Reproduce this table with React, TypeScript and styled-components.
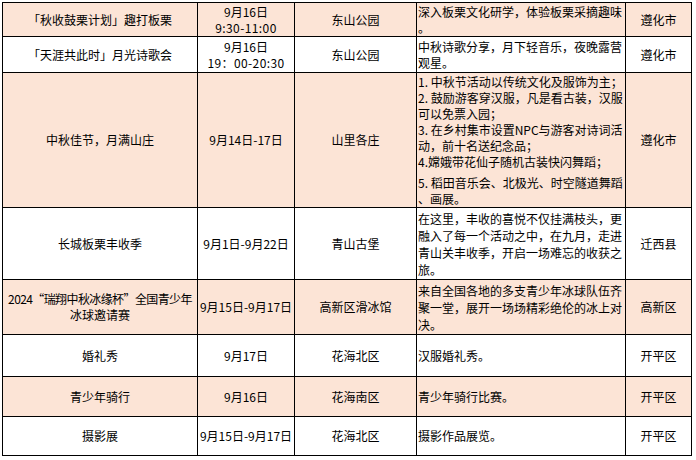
import React from 'react'
import styled, { createGlobalStyle } from 'styled-components'

const GlobalStyle = createGlobalStyle`
  html, body {
    margin: 0;
    padding: 0;
    background: #ffffff;
  }
  body {
    font-family: "Noto Sans CJK SC", "Noto Sans", sans-serif;
    font-size: 12px;
    color: #000000;
  }
`

const Page = styled.div`
  padding: 2px 0 0 2px;
`

const Sheet = styled.div`
  display: flex;
  flex-direction: column;
  width: 690px;
  border-left: 1px solid #000;
  border-top: 1px solid #000;
  box-sizing: border-box;
`

const Row = styled.div<{ $h: number; $peach: boolean }>`
  display: grid;
  grid-template-columns: 195px 97px 122px 209px 66px;
  height: ${({ $h }) => $h}px;
  background: ${({ $peach }) => ($peach ? '#fce4d6' : '#ffffff')};
`

const Cell = styled.div<{ $left?: boolean }>`
  display: flex;
  flex-direction: column;
  justify-content: center;
  align-items: ${({ $left }) => ($left ? 'flex-start' : 'center')};
  text-align: ${({ $left }) => ($left ? 'left' : 'center')};
  padding-left: ${({ $left }) => ($left ? '1px' : '0')};
  border-right: 1px solid #000;
  border-bottom: 1px solid #000;
  box-sizing: border-box;
  overflow: hidden;
  font-size: 12px;
  line-height: 16px;
  white-space: nowrap;
`

const Line = styled.div<{ $lh?: number; $shift?: number; $tight?: boolean }>`
  line-height: ${({ $lh }) => $lh ?? 16}px;
  margin-top: ${({ $shift }) => $shift ?? 0}px;
  letter-spacing: ${({ $tight }) => ($tight ? '-0.6px' : 'normal')};
`

const Clock = styled.div`
  font-size: 12px;
  line-height: 16px;
  letter-spacing: 0.4px;
`

interface Activity {
  name: string[]
  date: React.ReactNode
  place: string
  desc: string[]
  lh?: number
  shifts?: number[]
  area: string
  h: number
}

const rows: Activity[] = [
  {
    name: ['「秋收鼓栗计划」趣打板栗'],
    date: (
      <>
        <Line>9月16日</Line>
        <Clock>9:30-11:00</Clock>
      </>
    ),
    place: '东山公园',
    desc: ['深入板栗文化研学，体验板栗采摘趣味', '。'],
    area: '遵化市',
    h: 34,
  },
  {
    name: ['「天涯共此时」月光诗歌会'],
    date: (
      <>
        <Line>9月16日</Line>
        <Clock>19：00-20:30</Clock>
      </>
    ),
    place: '东山公园',
    desc: ['中秋诗歌分享，月下轻音乐，夜晚露营', '观星。'],
    area: '遵化市',
    h: 36,
  },
  {
    name: ['中秋佳节，月满山庄'],
    date: '9月14日-17日',
    place: '山里各庄',
    desc: [
      '1. 中秋节活动以传统文化及服饰为主；',
      '2. 鼓励游客穿汉服，凡是看古装，汉服',
      '可以免票入园；',
      '3. 在乡村集市设置NPC与游客对诗词活',
      '动，前十名送纪念品；',
      '4.嫦娥带花仙子随机古装快闪舞蹈；',
      '5. 稻田音乐会、北极光、时空隧道舞蹈',
      '、画展。',
    ],
    shifts: [0, 0, 0, 0, 0, 0, 5, 0],
    area: '遵化市',
    h: 135,
  },
  {
    name: ['长城板栗丰收季'],
    date: '9月1日-9月22日',
    place: '青山古堡',
    desc: [
      '在这里，丰收的喜悦不仅挂满枝头，更',
      '融入了每一个活动之中，在九月，走进',
      '青山关丰收季，开启一场难忘的收获之',
      '旅。',
    ],
    lh: 17,
    area: '迁西县',
    h: 72,
  },
  {
    name: ['2024“瑞翔中秋冰缘杯”全国青少年', '冰球邀请赛'],
    date: '9月15日-9月17日',
    place: '高新区滑冰馆',
    desc: [
      '来自全国各地的多支青少年冰球队伍齐',
      '聚一堂，展开一场场精彩绝伦的冰上对',
      '决。',
    ],
    lh: 17,
    area: '高新区',
    h: 55,
  },
  {
    name: ['婚礼秀'],
    date: '9月17日',
    place: '花海北区',
    desc: ['汉服婚礼秀。'],
    area: '开平区',
    h: 42,
  },
  {
    name: ['青少年骑行'],
    date: '9月16日',
    place: '花海南区',
    desc: ['青少年骑行比赛。'],
    area: '开平区',
    h: 40,
  },
  {
    name: ['摄影展'],
    date: '9月15日-9月17日',
    place: '花海北区',
    desc: ['摄影作品展览。'],
    area: '开平区',
    h: 39,
  },
]

const App = () => (
  <Page>
    <GlobalStyle />
    <Sheet>
      {rows.map((r, i) => (
        <Row key={i} $h={r.h} $peach={i % 2 === 0}>
          <Cell>
            {r.name.map((n) => (
              <Line key={n} $tight={n.length > 14}>
                {n}
              </Line>
            ))}
          </Cell>
          <Cell>{r.date}</Cell>
          <Cell>{r.place}</Cell>
          <Cell $left>
            {r.desc.map((d, j) => (
              <Line key={j} $lh={r.lh} $shift={r.shifts ? r.shifts[j] : 0}>
                {d}
              </Line>
            ))}
          </Cell>
          <Cell>{r.area}</Cell>
        </Row>
      ))}
    </Sheet>
  </Page>
)

export default App
